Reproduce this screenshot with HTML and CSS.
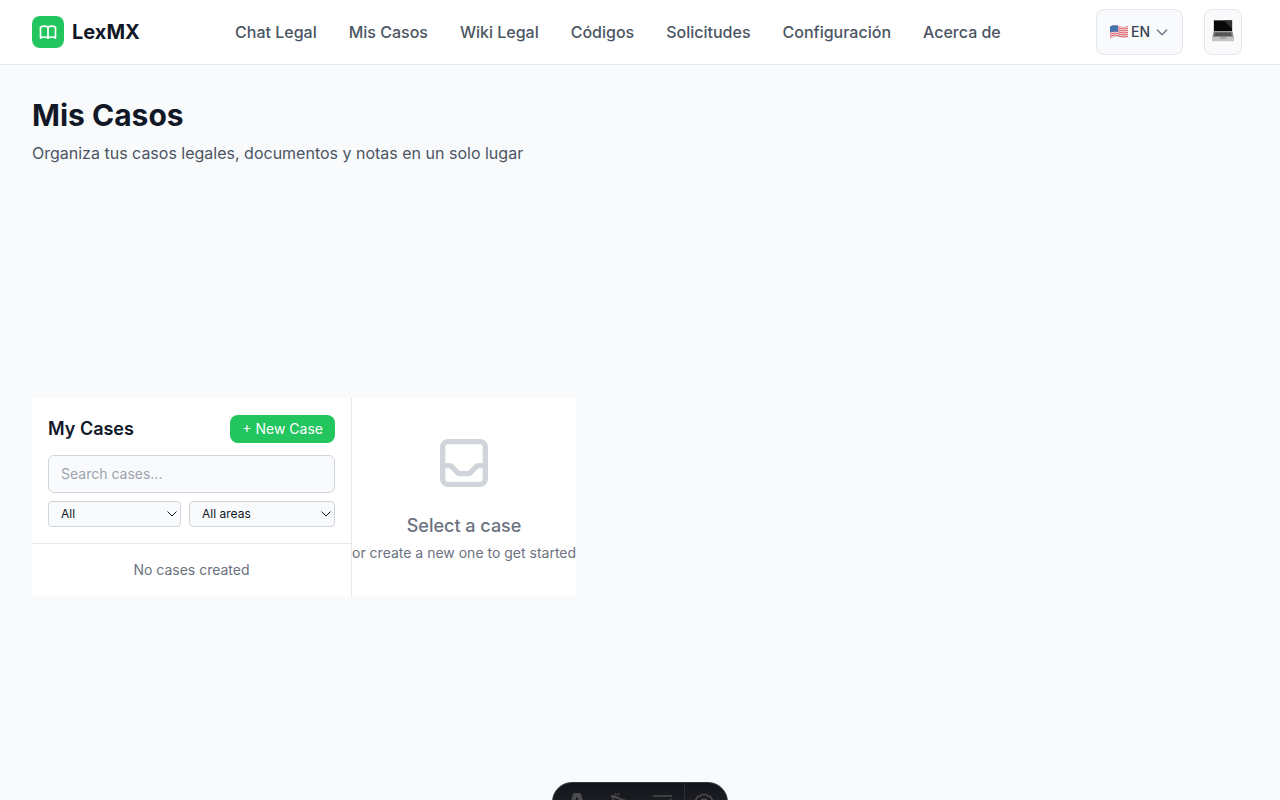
FILE: index.html
```html
<!DOCTYPE html>
<html lang="es">
<head>
<meta charset="utf-8">
<meta name="viewport" content="width=device-width, initial-scale=1">
<title>Mis Casos - LexMX</title>
<link rel="stylesheet" href="styles.css">
</head>
<body>
<header class="site-header">
  <a class="brand" href="#">
    <span class="brand-mark">
      <svg viewBox="0 0 24 24" width="20" height="20" fill="none" stroke="currentColor" stroke-width="2" stroke-linecap="round" stroke-linejoin="round" aria-hidden="true"><path d="M12 6.253v13m0-13C10.832 5.477 9.246 5 7.5 5S4.168 5.477 3 6.253v13C4.168 18.477 5.754 18 7.5 18s3.332.477 4.5 1.253m0-13C13.168 5.477 14.754 5 16.5 5c1.747 0 3.332.477 4.5 1.253v13C19.832 18.477 18.247 18 16.5 18c-1.746 0-3.332.477-4.5 1.253"/></svg>
    </span>
    <span class="brand-name">LexMX</span>
  </a>
  <nav class="site-nav" aria-label="Principal">
    <a href="#">Chat Legal</a>
    <a href="#">Mis Casos</a>
    <a href="#">Wiki Legal</a>
    <a href="#">Códigos</a>
    <a href="#">Solicitudes</a>
    <a href="#">Configuración</a>
    <a href="#">Acerca de</a>
  </nav>
  <div class="header-tools">
    <button class="tool-button language" type="button" aria-label="Language">
      <svg class="flag" viewBox="0 0 20 16" width="20" height="16" aria-hidden="true">
        <defs><clipPath id="flag-shape"><path d="M1 2.500C4 .8 7 .8 10 2s6 1.200 9 0v11c-3 1.300-6 1.200-9 .2s-6-.6-9 1.300z"/></clipPath></defs>
        <g clip-path="url(#flag-shape)">
          <path fill="#f3e6e8" d="M0 0h20v16H0z"/>
          <g fill="none" stroke="#d9525f" stroke-width="1">
            <path d="M0 2.500C4 .8 7 .8 10 2s6 1.200 10 0"/>
            <path d="M0 4.500C4 2.800 7 2.800 10 4s6 1.200 10 0"/>
            <path d="M0 6.500C4 4.800 7 4.800 10 6s6 1.200 10 0"/>
            <path d="M0 8.500C4 6.800 7 6.800 10 8s6 1.200 10 0"/>
            <path d="M0 10.500C4 8.800 7 8.800 10 10s6 1.200 10 0"/>
            <path d="M0 12.500C4 10.800 7 10.800 10 12s6 1.200 10 0"/>
            <path d="M0 14.500C4 12.800 7 12.800 10 14s6 1.200 10 0"/>
          </g>
          <path fill="#4573b0" d="M0 0h9v8c-3-1-6-.5-9 1z"/>
        </g>
      </svg>
      <span>EN</span>
      <svg class="chevron" viewBox="0 0 24 24" width="16" height="16" fill="none" stroke="currentColor" stroke-width="2" stroke-linecap="round" stroke-linejoin="round" aria-hidden="true"><path d="M19 9l-7 7-7-7"/></svg>
    </button>
    <button class="tool-button theme" type="button" aria-label="Theme">
      <svg viewBox="0 0 24 24" width="24" height="24" aria-hidden="true">
        <path fill="#b5b5b5" d="M2.500 1h19v12.500h-19z"/>
        <path fill="#080808" d="M3 1.500h18V12H3z"/>
        <path fill="#303030" d="M13 1.500h8V10z"/>
        <path fill="#8b8b8b" d="M2.500 12.500h19L23 20.500H1z"/>
        <path fill="#555" d="M4 13.500h16l.8 3.500H3.200z"/>
        <path fill="#c4c4c4" d="M1.500 18h21l.5 3.500q0 .7-.8.7H1.800q-.8 0-.8-.7z"/>
        <path fill="#a3a3a3" d="M9 18h6l.4 2H8.600z"/>
      </svg>
    </button>
  </div>
</header>

<main class="page">
  <h1>Mis Casos</h1>
  <p class="lead">Organiza tus casos legales, documentos y notas en un solo lugar</p>
  <div class="workspace">
    <section class="cases">
      <div class="cases-head">
        <div class="cases-title">
          <h2>My Cases</h2>
          <button class="new-case" type="button">+ New Case</button>
        </div>
        <input class="search" type="text" placeholder="Search cases..." aria-label="Search cases">
        <div class="filters">
          <div class="filter filter-status">
            <select aria-label="Status"><option>All</option></select>
            <svg viewBox="0 0 10 6" width="10" height="6" fill="none" stroke="currentColor" aria-hidden="true"><path d="M.5.500L5 5 9.500.500"/></svg>
          </div>
          <div class="filter">
            <select aria-label="Area"><option>All areas</option></select>
            <svg viewBox="0 0 10 6" width="10" height="6" fill="none" stroke="currentColor" aria-hidden="true"><path d="M.5.500L5 5 9.500.500"/></svg>
          </div>
        </div>
      </div>
      <p class="cases-empty">No cases created</p>
    </section>
    <section class="detail">
      <svg class="inbox" viewBox="0 0 24 24" width="64" height="64" fill="none" stroke="currentColor" stroke-width="2" stroke-linecap="round" stroke-linejoin="round" aria-hidden="true"><path d="M20 13V6a2 2 0 00-2-2H6a2 2 0 00-2 2v7m16 0v5a2 2 0 01-2 2H6a2 2 0 01-2-2v-5m16 0h-2.586a1 1 0 00-.707.293l-2.414 2.414a1 1 0 01-.707.293h-3.172a1 1 0 01-.707-.293l-2.414-2.414A1 1 0 006.586 13H4"/></svg>
      <p class="detail-title">Select a case</p>
      <p class="detail-text">or create a new one to get started</p>
    </section>
  </div>
</main>

<div class="dev-bar">
  <button type="button" aria-label="Menu"><svg viewBox="0 0 20 20" width="20" height="20" fill="currentColor"><path d="M6 1.200C6.300.4 6.800 0 7.600 0h4.800c.8 0 1.300.4 1.600 1.200L19 17c-1.500-.8-3-1.200-4.500-1.500L10.600 4.500c-.2-.6-1-.6-1.200 0L5.500 15.500C4 15.800 2.500 16.200 1 17z"/></svg></button>
  <button type="button" aria-label="Inspect"><svg viewBox="0 0 20 20" width="20" height="20" fill="none" stroke="currentColor" stroke-width="1.500"><path d="M2 3.500L17 8l-6 3-3 6zM1 3h3M5 .5l1.500 1.500M9 0L8 2M4 3l11 5"/></svg></button>
  <button type="button" aria-label="Audit"><svg viewBox="0 0 20 20" width="20" height="20" fill="none" stroke="currentColor" stroke-width="1.500"><path d="M0 3h19M0 9h8M0 15h8M10 11l3 3 5-8"/></svg></button>
  <button class="dev-settings" type="button" aria-label="Settings"><svg viewBox="0 0 20 20" width="20" height="20" fill="none" stroke="currentColor" stroke-width="1.500"><path d="M7.500 1.500h5l1 2 2.500-.5 2.500 4-1.500 2v2l1.500 2-2.500 4-2.500-.5-1 2h-5l-1-2-2.500.5-2.500-4L3 11V9L1.500 7 4 3l2.500.5z"/><circle cx="10" cy="10" r="4"/></svg></button>
</div>
</body>
</html>
```

FILE: styles.css
```css
*, *::before, *::after { box-sizing: border-box; }
body {
  margin: 0;
  background: #f9fafb;
  color: #111827;
  font-family: Inter, "Liberation Sans", sans-serif;
  font-size: 16px;
  line-height: 24px;
}
h1, h2, p { margin: 0; }
button, input, select { font: inherit; color: inherit; }
button { cursor: pointer; }
a { color: inherit; text-decoration: none; }
svg { display: block; }

.site-header {
  display: flex;
  align-items: center;
  justify-content: space-between;
  height: 65px;
  padding: 0 38px 0 32px;
  background: #fff;
  border-bottom: 1px solid #e5e7eb;
}
.brand { display: flex; align-items: center; gap: 8px; }
.brand-mark {
  display: grid;
  place-items: center;
  width: 32px;
  height: 32px;
  border-radius: 8px;
  background: #22c55e;
  color: #fff;
}
.brand-name { font-size: 20px; font-weight: 700; line-height: 28px; }
.site-nav { display: flex; gap: 32px; color: #4b5563; font-weight: 500; }
.header-tools { display: flex; gap: 21px; }
.tool-button {
  display: flex;
  align-items: center;
  height: 46px;
  border: 1px solid #e5e7eb;
  border-radius: 8px;
  background: #f9fafb;
  color: #374151;
  font-size: 14px;
  font-weight: 500;
  line-height: 20px;
}
.language { padding: 0 12px; }
.flag { margin-right: 2px; }
.chevron { margin-left: 4px; color: #6b7280; }
.theme { justify-content: center; width: 38px; padding: 0 0 2px; }

.page { padding: 32px 32px 0; }
.page h1 { font-size: 30px; font-weight: 700; line-height: 36px; }
.lead { margin: 8px 0 32px; color: #4b5563; }
.workspace { display: flex; align-items: center; min-height: 600px; }
.cases {
  width: 320px;
  background: #fff;
  border-right: 1px solid #e5e7eb;
}
.cases-head {
  padding: 17px 16px 16px;
  border-bottom: 1px solid #e5e7eb;
}
.cases-title {
  display: flex;
  align-items: center;
  justify-content: space-between;
  margin-bottom: 12px;
}
.cases-title h2 { font-size: 18px; font-weight: 600; line-height: 28px; }
.new-case {
  padding: 4px 12px;
  border: 0;
  border-radius: 8px;
  background: #22c55e;
  color: #fff;
  font-size: 14px;
  line-height: 20px;
}
.search {
  display: block;
  width: 100%;
  padding: 8px 12px;
  border: 1px solid #d1d5db;
  border-radius: 6px;
  background: #f9fafb;
  font-size: 14px;
  line-height: 20px;
}
.search::placeholder { color: #9ca3af; opacity: 1; }
.filters { display: flex; gap: 8px; margin-top: 8px; }
.filter {
  display: grid;
  flex: 1 1 auto;
  align-items: center;
}
.filter-status { flex: 0 0 133px; }
.filter > * { grid-area: 1 / 1; }
.filter select {
  width: 100%;
  height: 26px;
  padding: 0 24px 0 12px;
  border: 1px solid #d1d5db;
  border-radius: 4px;
  background: #f9fafb;
  font-size: 12px;
  line-height: 16px;
  appearance: none;
}
.filter svg { justify-self: end; margin-right: 4px; pointer-events: none; }
.cases-empty {
  padding: 16px;
  color: #6b7280;
  font-size: 14px;
  line-height: 20px;
  text-align: center;
}
.detail {
  display: flex;
  flex-direction: column;
  align-items: center;
  justify-content: center;
  min-height: 198px;
  background: #fff;
  color: #6b7280;
}
.inbox { margin-bottom: 16px; color: #d1d5db; }
.detail-title { font-size: 18px; font-weight: 500; line-height: 30px; }
.detail-text { margin-top: 2px; font-size: 14px; line-height: 20px; }

.dev-bar {
  position: fixed;
  bottom: -22px;
  left: 50%;
  display: flex;
  height: 40px;
  padding: 0 4px 0 2px;
  overflow: hidden;
  border: 1px solid #343841;
  border-radius: 20px;
  background: linear-gradient(180deg, #13151a, #25262b);
  transform: translateX(-50%);
}
.dev-bar button {
  display: grid;
  place-items: center;
  width: 43px;
  padding: 2px 0 0;
  border: 0;
  background: transparent;
  color: #4b4c50;
}
.dev-bar .dev-settings { width: 39px; border-left: 1px solid #2c2e35; }
```
